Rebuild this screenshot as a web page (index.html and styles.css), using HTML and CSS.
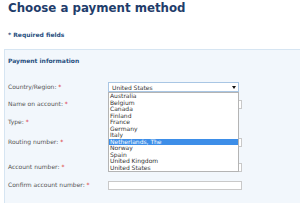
FILE: index.html
```html
<!DOCTYPE html>
<html lang="en">
<head>
    <meta charset="UTF-8">
    <title>Choose a payment method</title>
    <link rel="stylesheet" href="styles.css">
</head>
<body>
<h1 class="title">Choose a payment method</h1>
<p class="required">* Required fields</p>
<div class="panel">
    <h2 class="panel-title">Payment information</h2>
    <div class="row row-country">
        <label>Country/Region: <span class="star">*</span></label>
        <div class="select">
            <span>United States</span>
            <i class="arrow"></i>
        </div>
        <ul class="options">
            <li>Australia</li>
            <li>Belgium</li>
            <li>Canada</li>
            <li>Finland</li>
            <li>France</li>
            <li>Germany</li>
            <li>Italy</li>
            <li class="selected">Netherlands, The</li>
            <li>Norway</li>
            <li>Spain</li>
            <li>United Kingdom</li>
            <li>United States</li>
        </ul>
    </div>
    <div class="row row-name">
        <label>Name on account: <span class="star">*</span></label>
        <input type="text" class="field">
    </div>
    <div class="row row-type">
        <label>Type: <span class="star">*</span></label>
        <div class="select"><i class="arrow"></i></div>
    </div>
    <div class="row row-routing">
        <label>Routing number: <span class="star">*</span></label>
        <input type="text" class="field">
    </div>
    <div class="row row-account">
        <label>Account number: <span class="star">*</span></label>
        <input type="text" class="field">
    </div>
    <div class="row row-confirm">
        <label>Confirm account number: <span class="star">*</span></label>
        <input type="text" class="field">
    </div>
</div>
</body>
</html>
```

FILE: styles.css
```css
*{
    margin: 0;
    padding: 0;
    box-sizing: border-box;
}
html, body{
    height: 203px;
    overflow: hidden;
}
body{
    font-family: "DejaVu Sans", Verdana, sans-serif;
    background: #fff;
    color: #4a4a4a;
}
.title{
    margin: 1px 0 0 8px;
    font-size: 11.8px;
    line-height: 14px;
    font-weight: bold;
    color: #1f3d6b;
}
.required{
    margin: 16px 0 0 8px;
    font-size: 6px;
    line-height: 8px;
    font-weight: bold;
    color: #28507f;
}
.panel{
    margin: 10px 0 0 4px;
    padding: 7px 0 0 3px;
    height: 154px;
    background: #f2f7fc;
    border-top: 1px solid #d6e5f2;
    border-left: 1px solid #d6e5f2;
}
.panel-title{
    font-size: 6px;
    line-height: 8px;
    font-weight: bold;
    color: #28507f;
}
.row{
    display: flex;
    align-items: center;
    height: 10px;
    position: relative;
}
.row label{
    width: 100px;
    font-size: 6px;
    line-height: 10px;
    color: #555;
}
.star{
    color: #d9242b;
}
.row-country{ margin-top: 17px; }
.row-name{ margin-top: 7px; }
.row-type{ margin-top: 8px; }
.row-routing{ margin-top: 10px; }
.row-account{ margin-top: 15px; }
.row-confirm{ margin-top: 8px; }
.select{
    width: 131px;
    height: 10px;
    border: 1px solid #a9c6e4;
    background: #fff;
    display: flex;
    align-items: center;
    justify-content: space-between;
    padding: 0 2px 0 3px;
    font-size: 6px;
    color: #333;
}
.select .arrow{
    margin-left: auto;
}
.arrow{
    width: 0;
    height: 0;
    border-left: 2px solid transparent;
    border-right: 2px solid transparent;
    border-top: 3px solid #111;
}
.field{
    width: 134px;
    height: 9px;
    border: 1px solid #c9c9c9;
    background: #fff;
}
.options{
    list-style: none;
    position: absolute;
    left: 100px;
    top: 10px;
    width: 131px;
    border: 1px solid #b4b4b4;
    background: #fff;
    z-index: 2;
}
.options>li{
    height: 6.5px;
    line-height: 6.5px;
    font-size: 6px;
    padding-left: 1px;
    color: #333;
    white-space: nowrap;
}
.options .selected{
    background: #3d8ee8;
    color: #fff;
}
```
